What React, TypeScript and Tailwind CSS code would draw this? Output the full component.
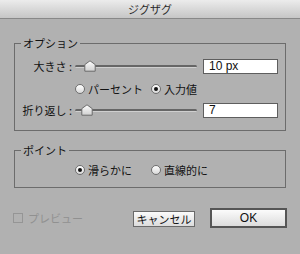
import React from "react";

const jp = "font-['Hiragino_Kaku_Gothic_Pro','Noto_Sans_CJK_JP',sans-serif]";

function Slider({ thumb }: { thumb: string }) {
  return (
    <div className="relative w-[122px] h-[14px]">
      <div className="absolute left-0 right-0 top-[6px] h-[3px] rounded-full bg-[#666] border-b border-[#cfcfcf]" />
      <svg className={`absolute top-[1px] ${thumb}`} width="12" height="12" viewBox="0 0 12 12">
        <defs>
          <linearGradient id="tg" x1="0" y1="0" x2="0" y2="1">
            <stop offset="0" stopColor="#ffffff" />
            <stop offset="1" stopColor="#cfcfcf" />
          </linearGradient>
        </defs>
        <path d="M6 0.8 L11.2 4.6 L11.2 11.2 L0.8 11.2 L0.8 4.6 Z" fill="url(#tg)" stroke="#6a6a6a" strokeWidth="1" strokeLinejoin="round" />
      </svg>
    </div>
  );
}

function Radio({ checked, label }: { checked?: boolean; label: string }) {
  return (
    <div className="flex items-center gap-[3px]">
      <div className="w-[10px] h-[10px] rounded-full border border-[#6f6f6f] bg-gradient-to-b from-[#ffffff] to-[#d8d8d8] flex items-center justify-center">
        {checked && <div className="w-[4px] h-[4px] rounded-full bg-[#111]" />}
      </div>
      <span className="text-[11px] leading-[14px] text-[#111]">{label}</span>
    </div>
  );
}

function Input({ value }: { value: string }) {
  return (
    <div className="w-[75px] h-[15px] bg-white border border-[#5e5e5e] pl-[5px] text-[12px] leading-[13px] text-[#111] font-['Liberation_Sans',sans-serif]">
      {value}
    </div>
  );
}

function Legend({ children }: { children: React.ReactNode }) {
  return (
    <div className="absolute left-[6px] top-[-8px] px-[2px] bg-[#b1b1b1] text-[11px] leading-[14px] text-[#111]">
      {children}
    </div>
  );
}

export default function App() {
  return (
    <div className={`w-[300px] h-[254px] bg-[#b1b1b1] ${jp} flex flex-col`}>
      <div className="h-[19px] shrink-0 bg-gradient-to-b from-[#ececec] to-[#c6c6c6] border-b border-[#888] flex items-center justify-center">
        <span className="text-[11px] text-[#2a2a2a] leading-[14px]">ジグザグ</span>
      </div>

      <div className="relative mx-[14px] mt-[24px] w-[272px] h-[88px] border border-[#6c6c6c] pt-[15px]">
        <Legend>オプション</Legend>
        <div className="flex items-center h-[14px]">
          <div className="w-[57px] mr-[3px] text-right text-[11px] leading-[14px] text-[#111] whitespace-pre">大きさ :</div>
          <Slider thumb="left-[9px]" />
          <div className="ml-[6px]"><Input value="10 px" /></div>
        </div>
        <div className="grid grid-cols-[76px_auto] items-center h-[14px] mt-[9px] pl-[60px]">
          <Radio label="パーセント" />
          <Radio checked label="入力値" />
        </div>
        <div className="flex items-center h-[14px] mt-[7px]">
          <div className="w-[57px] mr-[3px] text-right text-[11px] leading-[14px] text-[#111] whitespace-pre">折り返し :</div>
          <Slider thumb="left-[6px]" />
          <div className="ml-[6px]"><Input value="7" /></div>
        </div>
      </div>

      <div className="relative mx-[14px] mt-[19px] w-[272px] h-[38px] border border-[#6c6c6c] pt-[12px]">
        <Legend>ポイント</Legend>
        <div className="grid grid-cols-[76px_auto] items-center h-[14px] pl-[60px]">
          <Radio checked label="滑らかに" />
          <Radio label="直線的に" />
        </div>
      </div>

      <div className="flex items-center h-[20px] mt-[20px] pl-[13px] pr-[13px]">
        <div className="flex items-center gap-[5px]">
          <div className="w-[10px] h-[10px] border border-[#959595]" />
          <span className="text-[11px] leading-[14px] text-[#909090]">プレビュー</span>
        </div>
        <div className="ml-auto flex items-center gap-[15px]">
          <div className="w-[62px] h-[16px] mt-[2px] border border-[#6a6a6a] bg-gradient-to-b from-[#fbfbfb] to-[#dcdcdc] flex items-center justify-center text-[11px] leading-[14px] text-[#111]">
            キャンセル
          </div>
          <div className="w-[77px] h-[20px] border-2 border-[#555] bg-gradient-to-b from-[#fbfbfb] to-[#dcdcdc] flex items-center justify-center text-[12px] leading-[14px] text-[#111] font-['Liberation_Sans',sans-serif]">
            OK
          </div>
        </div>
      </div>
    </div>
  );
}
